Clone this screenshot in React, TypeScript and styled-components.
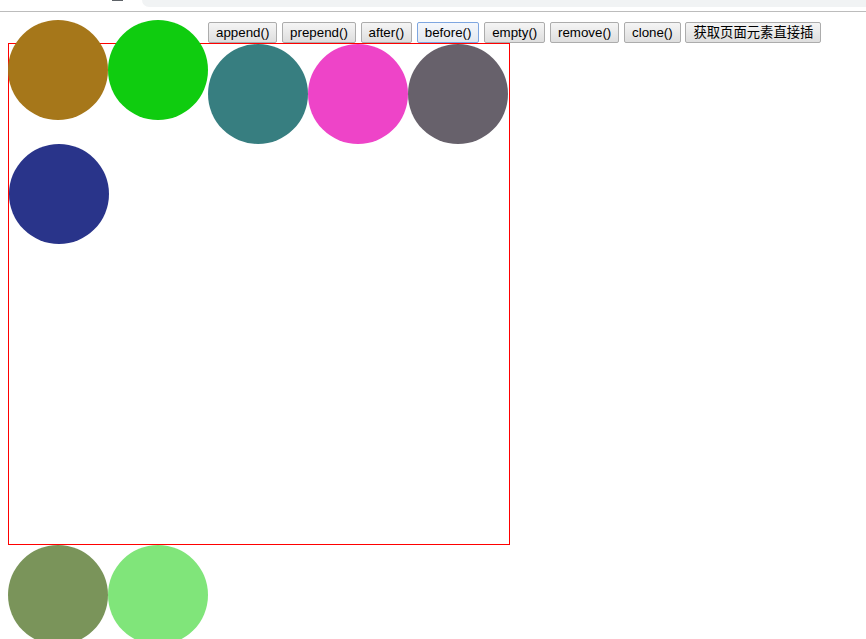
import React from 'react';
import styled, { createGlobalStyle } from 'styled-components';

const GlobalStyle = createGlobalStyle`
  html, body {
    margin: 0;
    padding: 0;
    background: #fff;
    font-family: 'Liberation Sans', 'Noto Sans CJK SC', sans-serif;
  }
`;

const actions = ['append()', 'prepend()', 'after()', 'before()', 'empty()', 'remove()', 'clone()', '获取页面元素直接插'];

const App = () => {
  return (
    <>
      <GlobalStyle />
      <ChromeStrip>
        <TabMark />
        <AddressField />
      </ChromeStrip>
      <Stage>
        <Box>
          <BoxRow $indent={199}>
            <Ball $color="#377e80" />
            <Ball $color="#ee44c8" />
            <Ball $color="#67616b" />
          </BoxRow>
          <BoxRow $indent={0}>
            <Ball $color="#29348a" />
          </BoxRow>
        </Box>
        <OuterBall $color="#a6771a" $col={1} />
        <OuterBall $color="#0fcc0f" $col={2} />
        <Toolbar>
          {actions.map((label) => (
            <ActionButton key={label} $focused={label === 'before()'}>
              {label}
            </ActionButton>
          ))}
        </Toolbar>
        <BottomRow>
          <Ball $color="#7a945a" />
          <Ball $color="#80e57a" />
        </BottomRow>
      </Stage>
    </>
  );
};

export default App;

const ChromeStrip = styled.div`
  display: flex;
  align-items: flex-start;
  height: 11px;
  border-bottom: 1px solid #bcbcbc;
`;

const TabMark = styled.div`
  width: 11px;
  height: 1px;
  margin-left: 112px;
  background: #5f6368;
`;

const AddressField = styled.div`
  flex: 1;
  height: 7px;
  margin-left: 19px;
  background: #f1f3f4;
  border-bottom-left-radius: 8px;
`;

const Stage = styled.div`
  display: grid;
  grid-template-columns: 100px 100px 1fr;
  grid-template-rows: 23px 77px 425px 100px;
  padding: 8px;
`;

const Ball = styled.div<{ $color: string }>`
  width: 100px;
  height: 100px;
  flex: none;
  border-radius: 50%;
  background: ${(p) => p.$color};
`;

const OuterBall = styled(Ball)<{ $col: number }>`
  grid-column: ${(p) => p.$col};
  grid-row: 1 / 3;
`;

const Box = styled.div`
  grid-column: 1 / 4;
  grid-row: 2 / 4;
  width: 502px;
  height: 502px;
  box-sizing: border-box;
  border: 1px solid #ff0000;
  display: flex;
  flex-direction: column;
`;

const BoxRow = styled.div<{ $indent: number }>`
  display: flex;
  padding-left: ${(p) => p.$indent}px;
`;

const Toolbar = styled.div`
  grid-column: 3;
  grid-row: 1;
  align-self: start;
  display: flex;
  gap: 4.7px;
  margin-top: 2px;
`;

const ActionButton = styled.button<{ $focused: boolean }>`
  height: 21px;
  padding: 0 7px;
  box-sizing: border-box;
  font-family: 'Liberation Sans', 'Noto Sans CJK SC', sans-serif;
  font-size: 13.33px;
  line-height: 19px;
  color: #000;
  white-space: nowrap;
  border: 1px solid ${(p) => (p.$focused ? '#7ea6e0' : '#acacac')};
  border-radius: 2px;
  background: ${(p) =>
    p.$focused
      ? 'linear-gradient(#f4f7fc, #e3e8ef)'
      : 'linear-gradient(#f5f5f5, #dedede)'};
  cursor: default;
`;

const BottomRow = styled.div`
  grid-column: 1 / 4;
  grid-row: 4;
  display: flex;
`;
